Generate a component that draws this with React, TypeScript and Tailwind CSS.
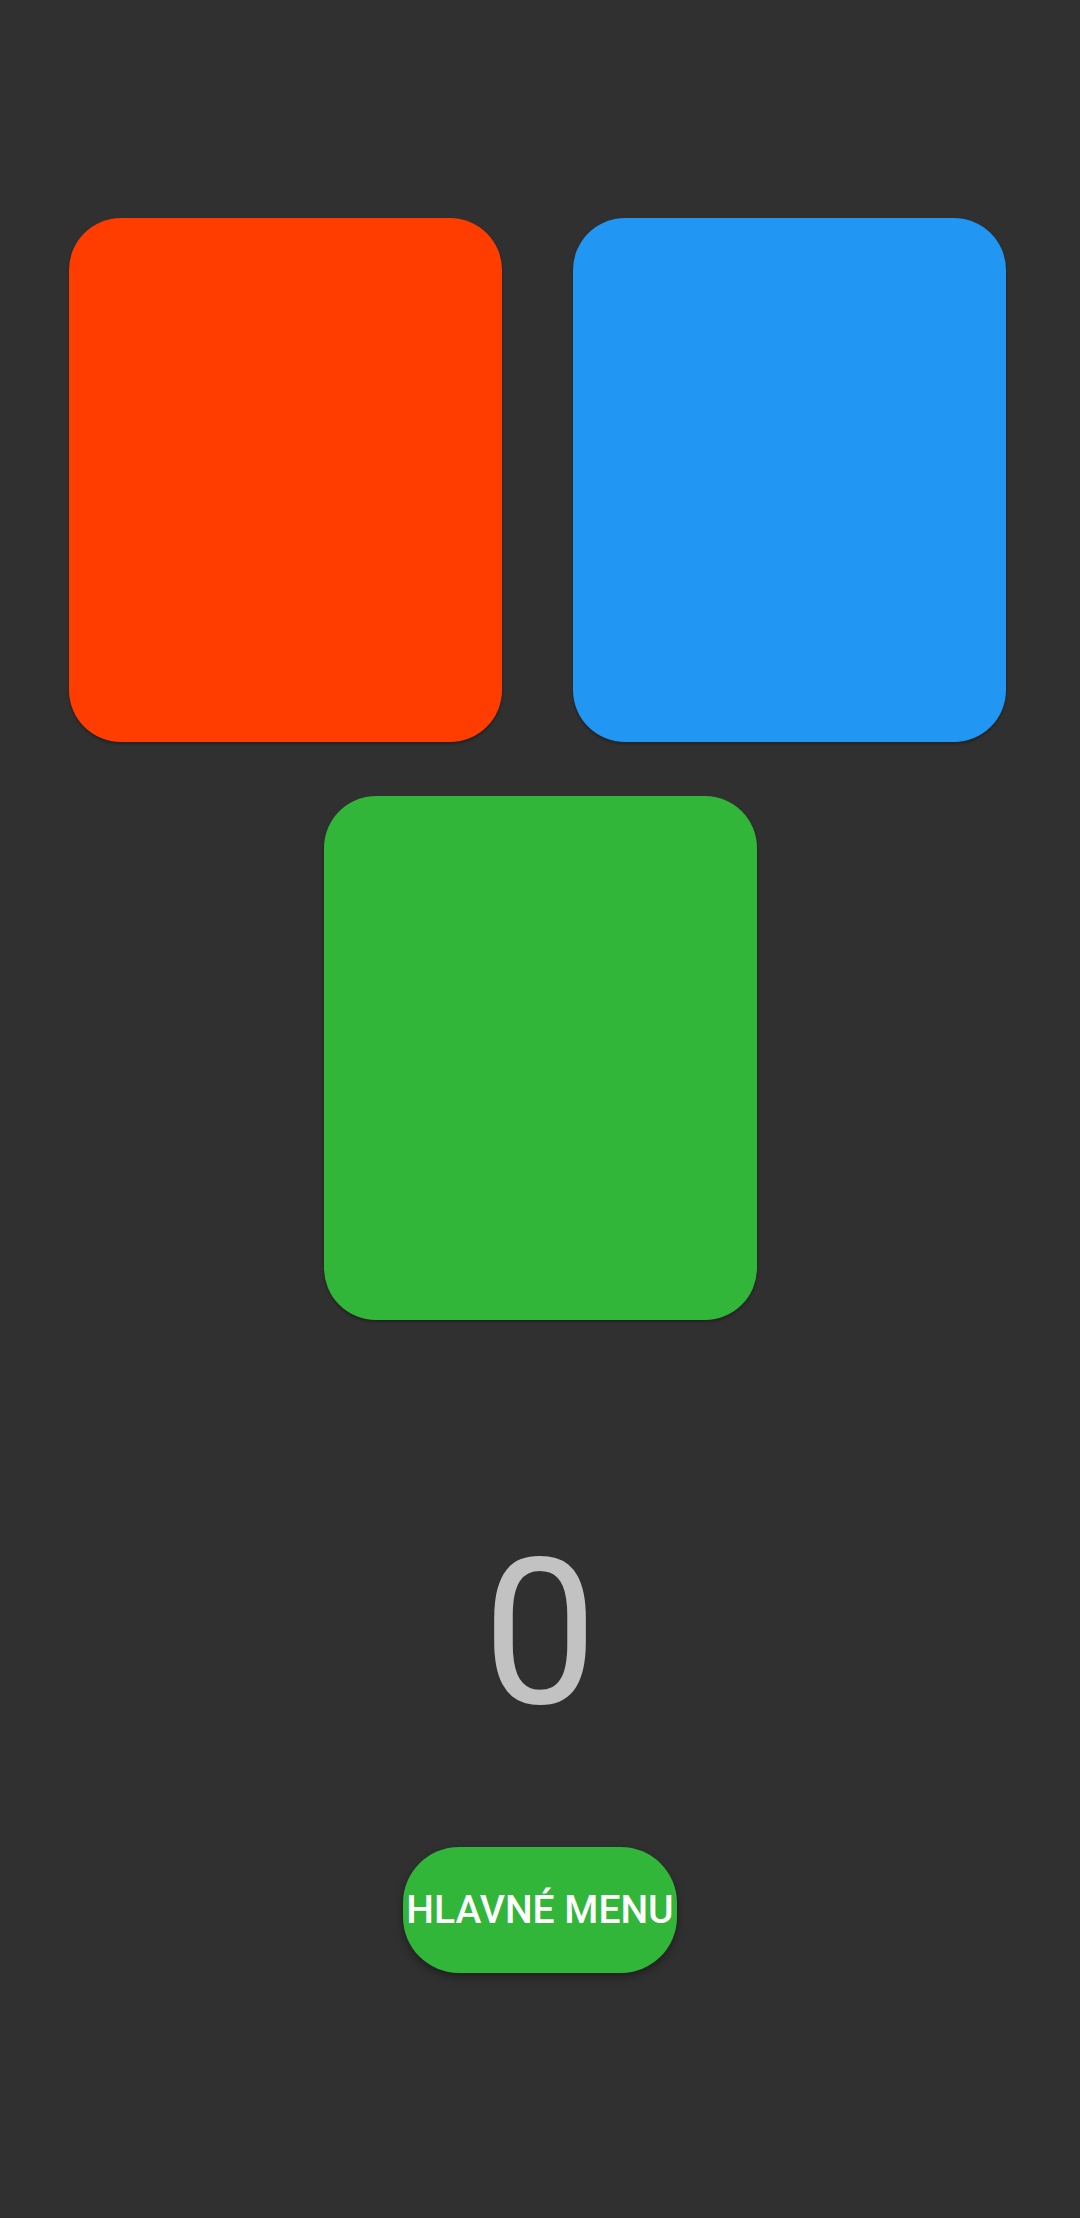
import React from "react";

export default function App() {
  return (
    <div
      className="w-[1080px] h-[2218px] bg-[#303030] flex flex-col items-center overflow-hidden"
      style={{ fontFamily: "Roboto, 'Noto Sans', sans-serif" }}
    >
      <div className="mt-[218px] flex gap-[71px] pl-[69px] w-full justify-start">
        <div className="w-[433px] h-[524px] rounded-[52px] bg-[#ff3d00] shadow-[0_2px_3px_rgba(0,0,0,0.3)]" />
        <div className="w-[433px] h-[524px] rounded-[52px] bg-[#2196f3] shadow-[0_2px_3px_rgba(0,0,0,0.3)]" />
      </div>
      <div className="mt-[54px] w-[433px] h-[524px] rounded-[52px] bg-[#31b639] shadow-[0_2px_3px_rgba(0,0,0,0.3)]" />
      <div className="mt-[204px] h-[220px] flex items-center justify-center text-[204px] leading-none text-[#c2c2c2] font-normal">
        0
      </div>
      <div className="mt-[103px] w-[274px] h-[126px] rounded-[56px] bg-[#31b639] shadow-[0_4px_8px_rgba(0,0,0,0.35)] flex items-center justify-center overflow-hidden">
        <span className="whitespace-nowrap text-white text-[39px] font-medium leading-none">
          HLAVNÉ MENU
        </span>
      </div>
    </div>
  );
}
